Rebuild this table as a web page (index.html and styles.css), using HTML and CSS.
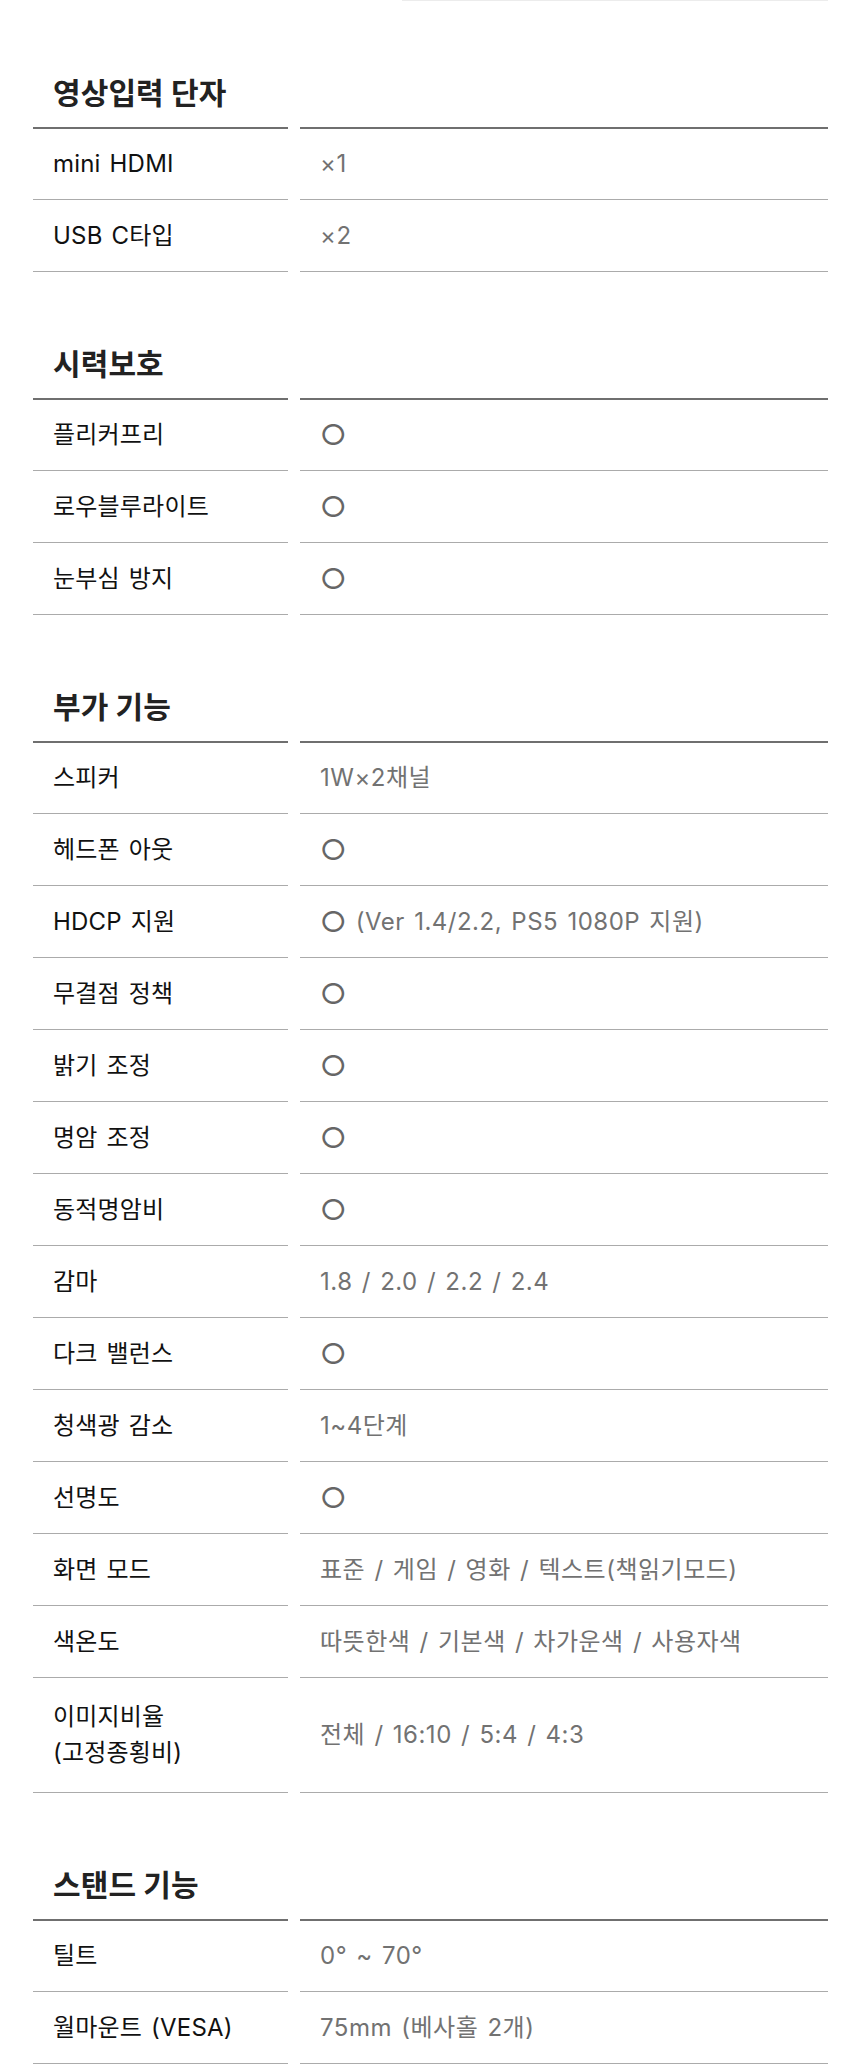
FILE: index.html
```html
<!DOCTYPE html>
<html lang="ko">
<head>
<meta charset="utf-8">
<title>스펙</title>
<link rel="stylesheet" href="styles.css">
</head>
<body>
<div class="page">
  <div class="prev-edge"></div>

  <section class="spec">
    <h2 class="spec-title">영상입력 단자</h2>
    <div class="spec-table">
      <div class="row"><div class="label">mini HDMI</div><div class="value">×1</div></div>
      <div class="row"><div class="label">USB C타입</div><div class="value">×2</div></div>
    </div>
  </section>

  <section class="spec">
    <h2 class="spec-title">시력보호</h2>
    <div class="spec-table">
      <div class="row"><div class="label">플리커프리</div><div class="value"><span class="mark">○</span></div></div>
      <div class="row"><div class="label">로우블루라이트</div><div class="value"><span class="mark">○</span></div></div>
      <div class="row"><div class="label">눈부심 방지</div><div class="value"><span class="mark">○</span></div></div>
    </div>
  </section>

  <section class="spec">
    <h2 class="spec-title">부가 기능</h2>
    <div class="spec-table">
      <div class="row"><div class="label">스피커</div><div class="value">1W×2채널</div></div>
      <div class="row"><div class="label">헤드폰 아웃</div><div class="value"><span class="mark">○</span></div></div>
      <div class="row"><div class="label">HDCP 지원</div><div class="value"><span class="mark">○</span>&nbsp;(Ver 1.4/2.2, PS5 1080P 지원)</div></div>
      <div class="row"><div class="label">무결점 정책</div><div class="value"><span class="mark">○</span></div></div>
      <div class="row"><div class="label">밝기 조정</div><div class="value"><span class="mark">○</span></div></div>
      <div class="row"><div class="label">명암 조정</div><div class="value"><span class="mark">○</span></div></div>
      <div class="row"><div class="label">동적명암비</div><div class="value"><span class="mark">○</span></div></div>
      <div class="row"><div class="label">감마</div><div class="value">1.8 / 2.0 / 2.2 / 2.4</div></div>
      <div class="row"><div class="label">다크 밸런스</div><div class="value"><span class="mark">○</span></div></div>
      <div class="row"><div class="label">청색광 감소</div><div class="value">1~4단계</div></div>
      <div class="row"><div class="label">선명도</div><div class="value"><span class="mark">○</span></div></div>
      <div class="row"><div class="label">화면 모드</div><div class="value">표준 / 게임 / 영화 / 텍스트(책읽기모드)</div></div>
      <div class="row"><div class="label">색온도</div><div class="value">따뜻한색 / 기본색 / 차가운색 / 사용자색</div></div>
      <div class="row row-tall"><div class="label">이미지비율<br>(고정종횡비)</div><div class="value">전체 / 16:10 / 5:4 / 4:3</div></div>
    </div>
  </section>

  <section class="spec">
    <h2 class="spec-title">스탠드 기능</h2>
    <div class="spec-table">
      <div class="row"><div class="label">틸트</div><div class="value">0° ~ 70°</div></div>
      <div class="row"><div class="label">월마운트 (VESA)</div><div class="value">75mm (베사홀 2개)</div></div>
    </div>
  </section>
</div>
</body>
</html>
```

FILE: styles.css
```css
* {
  box-sizing: border-box;
}

html, body {
  margin: 0;
  padding: 0;
  background: #ffffff;
}

body {
  font-family: Inter, "Noto Sans CJK KR", sans-serif;
  color: #111111;
}

.page {
  padding: 0 32px 0 33px;
}

.prev-edge {
  height: 1px;
  margin-left: 369px;
  background: #ececec;
}

.spec-title {
  margin: 0;
  height: 126px;
  display: flex;
  align-items: flex-end;
  padding: 0 0 14px 20px;
  font-size: 30px;
  line-height: 40px;
  font-weight: 700;
  color: #222222;
  letter-spacing: 0.1px;
}

.row {
  display: grid;
  grid-template-columns: 255px 528px;
  column-gap: 12px;
}

.label,
.value {
  min-height: 72px;
  display: flex;
  align-items: center;
  border-bottom: 1px solid #ababab;
  font-size: 24px;
  line-height: 36px;
}

.row:first-child .label,
.row:first-child .value {
  border-top: 2px solid #6f6f6f;
  min-height: 73px;
}

.label {
  padding: 0 8px 0 20px;
  color: #111111;
  letter-spacing: 0.2px;
  word-spacing: 2px;
}

.value {
  padding: 0 8px 0 20px;
  color: #727272;
  letter-spacing: 0.5px;
  word-spacing: 2px;
  white-space: pre;
}

.mark {
  font-size: 29px;
  line-height: 36px;
  letter-spacing: 0;
  color: #666666;
}

.row-tall .label,
.row-tall .value {
  padding-top: 21px;
  padding-bottom: 21px;
}
```
